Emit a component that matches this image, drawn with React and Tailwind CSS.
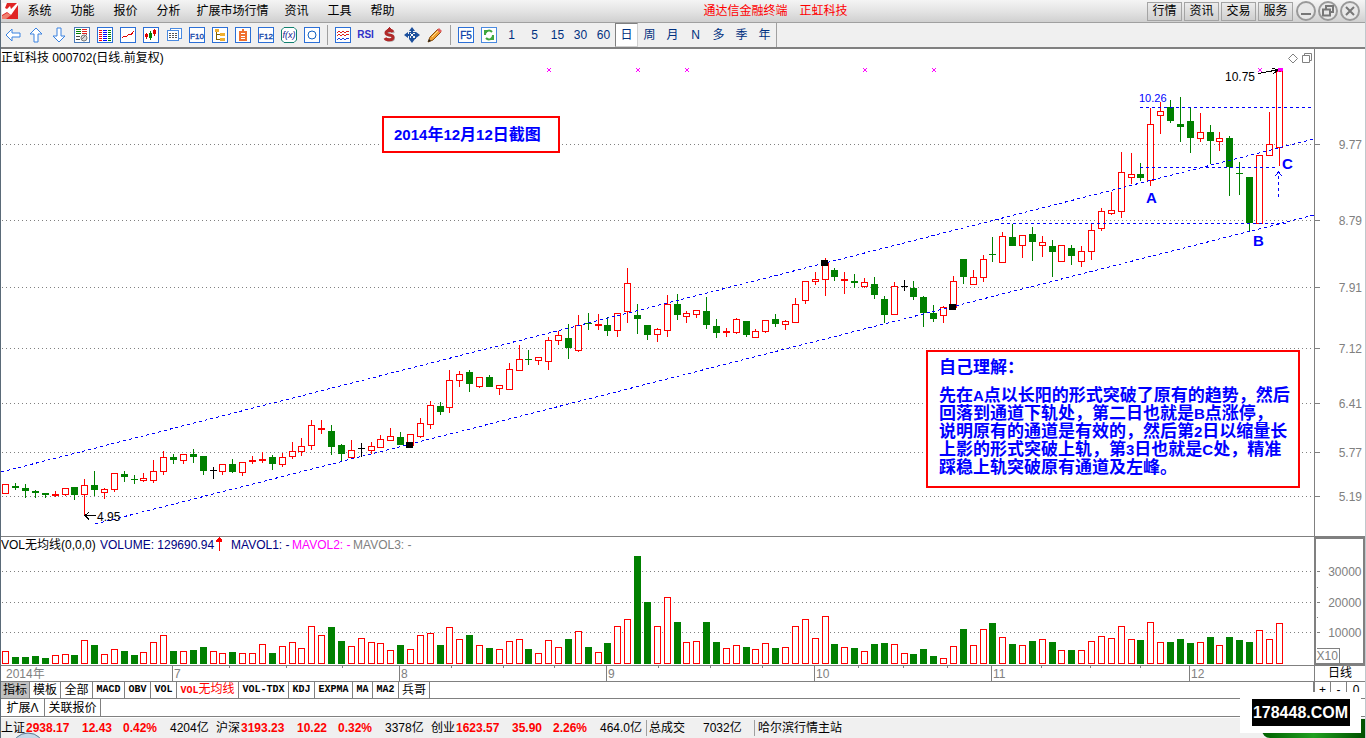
import React, { useState } from 'react';

const RED = '#ff0000';
const GREEN = '#008000';
const BLUE = '#0000ff';
const GRAY = '#808080';

// kind (r: up, g: down, R: flat up, k: unchanged), high, body top, body bottom, low, volume top
const DAYS = [
  ['r', 484, 484, 494, 494, 651], ['g', 483, 486, 488, 490, 657], ['g', 484, 488, 491, 498, 657],
  ['g', 490, 491, 493, 498, 656], ['g', 493, 493, 495, 498, 658], ['R', 491, 494, 496, 497, 655],
  ['r', 488, 488, 495, 496, 654], ['g', 487, 487, 495, 500, 655], ['r', 479, 485, 495, 515, 640],
  ['g', 471, 485, 490, 496, 645], ['r', 488, 489, 493, 499, 654], ['r', 473, 473, 490, 492, 649],
  ['g', 471, 474, 477, 482, 651], ['g', 475, 479, 480, 484, 655], ['r', 473, 478, 481, 482, 652],
  ['r', 460, 471, 481, 483, 642], ['r', 451, 457, 472, 475, 635], ['g', 454, 457, 460, 464, 651],
  ['r', 454, 454, 461, 464, 651], ['g', 449, 454, 457, 463, 650], ['g', 456, 456, 471, 475, 647],
  ['k', 467, 470, 471, 479, 651], ['r', 464, 464, 472, 475, 653], ['g', 459, 464, 472, 473, 652],
  ['r', 462, 462, 473, 476, 653], ['R', 456, 460, 462, 464, 653], ['R', 452, 459, 461, 463, 644],
  ['g', 455, 457, 464, 470, 653], ['r', 453, 457, 465, 467, 646], ['r', 442, 451, 457, 459, 642],
  ['r', 438, 446, 452, 456, 648], ['r', 420, 425, 446, 450, 626], ['R', 420, 428, 430, 434, 635],
  ['g', 425, 431, 447, 455, 627], ['g', 444, 445, 454, 462, 641], ['r', 440, 450, 458, 458, 646],
  ['k', 443, 448, 449, 457, 638], ['r', 442, 446, 451, 454, 642], ['r', 435, 439, 448, 448, 643],
  ['r', 428, 436, 441, 441, 650], ['g', 432, 437, 445, 445, 645], ['r', 434, 434, 446, 446, 649],
  ['r', 418, 423, 437, 438, 635], ['r', 401, 405, 425, 429, 633], ['g', 402, 406, 412, 415, 645],
  ['r', 370, 380, 408, 413, 627], ['r', 371, 374, 381, 387, 639], ['g', 370, 372, 384, 392, 635],
  ['r', 377, 377, 387, 388, 645], ['g', 375, 377, 387, 387, 648], ['r', 385, 385, 389, 395, 649],
  ['r', 363, 369, 390, 390, 641], ['r', 345, 359, 371, 371, 639], ['g', 350, 359, 360, 365, 649],
  ['r', 357, 357, 361, 365, 653], ['r', 337, 340, 362, 370, 640], ['r', 331, 335, 341, 345, 647],
  ['g', 324, 338, 348, 359, 639], ['r', 315, 325, 351, 352, 631], ['g', 313, 323, 324, 330, 647],
  ['R', 314, 324, 326, 330, 652], ['g', 317, 325, 331, 336, 643], ['r', 313, 313, 331, 337, 626],
  ['r', 268, 283, 312, 323, 619], ['g', 304, 315, 319, 334, 556], ['g', 325, 325, 335, 340, 602],
  ['r', 328, 329, 335, 342, 626], ['r', 295, 304, 331, 337, 597], ['g', 294, 304, 315, 320, 622],
  ['r', 311, 313, 317, 323, 642], ['r', 310, 310, 315, 318, 641], ['g', 297, 311, 325, 329, 622],
  ['g', 319, 326, 333, 338, 642], ['R', 328, 331, 333, 337, 648], ['r', 318, 319, 333, 334, 645],
  ['g', 321, 321, 335, 337, 647], ['r', 329, 331, 338, 338, 649], ['r', 320, 320, 332, 333, 643],
  ['g', 314, 319, 324, 327, 648], ['r', 320, 321, 325, 330, 647], ['r', 298, 304, 323, 323, 626],
  ['r', 281, 281, 301, 304, 619], ['r', 272, 279, 282, 285, 638], ['r', 258, 262, 280, 296, 616],
  ['g', 268, 270, 277, 281, 644], ['R', 272, 279, 281, 294, 647], ['g', 274, 281, 283, 288, 648],
  ['r', 278, 282, 287, 288, 651], ['g', 277, 284, 295, 299, 644], ['g', 296, 299, 315, 323, 643],
  ['r', 282, 286, 315, 315, 644], ['k', 280, 286, 287, 291, 653], ['g', 281, 288, 297, 300, 654],
  ['g', 296, 297, 313, 327, 649], ['g', 305, 313, 319, 322, 656], ['r', 306, 307, 316, 323, 658],
  ['r', 276, 281, 308, 308, 646], ['g', 259, 259, 277, 284, 629], ['r', 270, 277, 285, 285, 645],
  ['r', 255, 259, 278, 282, 629], ['g', 237, 254, 255, 262, 623], ['r', 232, 236, 263, 263, 637],
  ['g', 224, 237, 246, 246, 644], ['r', 235, 235, 246, 258, 645], ['g', 227, 234, 242, 261, 641],
  ['r', 236, 242, 246, 257, 639], ['g', 240, 246, 252, 277, 642], ['r', 245, 245, 262, 262, 650],
  ['g', 245, 248, 256, 265, 650], ['r', 246, 251, 262, 267, 650], ['r', 223, 230, 252, 260, 641],
  ['r', 208, 211, 229, 231, 636], ['r', 192, 210, 214, 215, 638], ['r', 152, 172, 212, 218, 626],
  ['r', 153, 174, 178, 184, 639], ['g', 163, 174, 178, 181, 640], ['r', 108, 124, 181, 186, 622],
  ['r', 102, 111, 116, 134, 642], ['g', 100, 107, 121, 123, 642], ['g', 97, 124, 127, 142, 639],
  ['g', 108, 121, 138, 153, 643], ['r', 113, 132, 139, 142, 642], ['g', 125, 132, 141, 164, 637],
  ['r', 132, 138, 142, 151, 645], ['g', 136, 138, 167, 196, 637], ['g', 162, 173, 174, 195, 640],
  ['g', 177, 177, 223, 232, 642], ['r', 155, 155, 224, 224, 630], ['r', 112, 144, 156, 156, 639],
  ['r', 71, 71, 148, 166, 623],
];

const dayX = (i) => Math.floor(5.8 + i * 9.871);

const PRICES = [[144, '9.77'], [220, '8.79'], [287, '7.91'], [348, '7.12'], [403, '6.41'], [452, '5.77'], [496, '5.19']];
const VOLUMES = [[571, '30000'], [602, '20000'], [632, '10000']];
const MONTHS = [[172, '7'], [399, '8'], [606, '9'], [814, '10'], [991, '11'], [1189, '12']];
const WEEKS = [229, 286, 342, 451, 503, 554, 658, 710, 762, 858, 903, 947, 1041, 1090, 1140];
const MARKS = [549, 638, 687, 865, 934, 1260, 1280];

const SANS = "font-['Liberation_Sans','Noto_Sans_CJK_SC',sans-serif]";

function GridLine({ y }) {
  return <line x1="2" x2="1313" y1={y + 0.5} y2={y + 0.5} stroke={GRAY} strokeDasharray="1 3" />;
}

function Candle({ x, day }) {
  const [kind, high, top, bottom, low] = day;
  const color = kind === 'g' ? GREEN : kind === 'k' ? '#000' : RED;
  return (
    <g>
      <rect x={x} y={high} width="1" height={low - high} fill={color} />
      {kind === 'r' ? (
        <rect x={x - 2.5} y={top + 0.5} width="6" height={bottom - top - 1} fill="#fff" stroke={color} />
      ) : (
        <rect x={x - 3} y={top} width="7" height={bottom - top} fill={color} />
      )}
    </g>
  );
}

function PriceChart() {
  return (
    <svg viewBox="1 67 1313 469" className="block w-full h-[469px]" shapeRendering="crispEdges" fontSize="12">
      {PRICES.map(([y]) => <GridLine key={y} y={y} />)}
      {DAYS.map((day, i) => <Candle key={i} x={dayX(i)} day={day} />)}

      {/* channel and levels */}
      <g stroke={BLUE} strokeDasharray="3 3" fill="none">
        <path d="M1 472L1314 139M95 524L1314 215" />
        <path d="M1140 107.5H1312M1140 167.5H1278M1001 223.5H1286" />
        <path d="M1278.5 197V172" />
      </g>
      <path d="M1275 176l3.5-4 3.5 4" stroke={BLUE} fill="none" />
      <path d="M821 260h7v6h-7zM406 442h7v6h-7zM949 304h7v6h-7z" />

      {MARKS.map((x) => (
        <path key={x} d={`M${x - 2} 68l4 4M${x + 2} 68l-4 4`} stroke="#ff00ff" />
      ))}
      <path d="M1278 68h5v3h-5z" fill="#ff00ff" />

      {/* extremes */}
      <g stroke="#000" fill="none">
        <path d="M1258 73.5L1277 70M1272 68l6 2-5 4" />
        <path d="M85 515.5H96M89 512l-4 3.5 4 4" />
      </g>
      <text x="1225" y="81">10.75</text>
      <text x="97" y="521">4.95</text>
      <text x="1139" y="102" fill={BLUE} fontSize="11">10.26</text>

      <g fill={BLUE} fontSize="15" fontWeight="bold">
        <text x="1146" y="203">A</text>
        <text x="1253" y="246">B</text>
        <text x="1282" y="169">C</text>
      </g>
    </svg>
  );
}

function PriceAxis() {
  return (
    <svg viewBox="1315 49 50 487" className="block w-full h-[487px]" shapeRendering="crispEdges" fontSize="12" fill={GRAY}>
      {PRICES.map(([y, label]) => (
        <g key={y}>
          <rect x="1315" y={y} width="5" height="1" />
          <text x="1362" y={y + 5} textAnchor="end">{label}</text>
        </g>
      ))}
    </svg>
  );
}

function VolumeChart() {
  return (
    <svg viewBox="1 553 1313 112" className="block w-full h-[112px]" shapeRendering="crispEdges">
      {VOLUMES.map(([y]) => <GridLine key={y} y={y} />)}
      {DAYS.map((day, i) => {
        const x = dayX(i);
        const top = day[5];
        return day[0] === 'g' ? (
          <rect key={i} x={x - 3} y={top} width="7" height={664 - top} fill={GREEN} />
        ) : (
          <rect key={i} x={x - 2.5} y={top + 0.5} width="6" height={663 - top} fill="#fff" stroke={RED} />
        );
      })}
    </svg>
  );
}

function VolumeAxis() {
  return (
    <svg viewBox="1317 539 46 124" className="block w-full h-[124px]" shapeRendering="crispEdges" fontSize="12" fill={GRAY}>
      {VOLUMES.map(([y, label]) => (
        <g key={y}>
          <rect x="1317" y={y} width="3" height="1" />
          <text x="1362" y={y + 5} textAnchor="end">{label}</text>
        </g>
      ))}
      <path d="M1317 587h1v1h-1zM1317 617h1v1h-1z" />
      <path d="M1317 648.5h22.500v14.500" fill="none" stroke={GRAY} />
      <text x="1317" y="660">X10</text>
    </svg>
  );
}

function DateAxis() {
  return (
    <svg viewBox="1 666 1313 15" className="block w-full h-[15px]" shapeRendering="crispEdges" fontSize="12" fill={GRAY}>
      <text x="6" y="678">2014年</text>
      {MONTHS.map(([x, label]) => (
        <g key={x}>
          <rect x={x} y="666" width="1" height="15" />
          <text x={x + 2} y="678">{label}</text>
        </g>
      ))}
      {WEEKS.map((x) => <rect key={x} x={x} y="666" width="1" height="2" />)}
    </svg>
  );
}

// toolbar glyphs, all on a 16 x 16 grid
function Icon({ children, frame = '#2b6fd6' }) {
  return (
    <svg viewBox="0 0 16 16" className="size-4" fill="none" shapeRendering="crispEdges">
      {frame && <rect x="0.5" y="0.5" width="15" height="15" fill="#fff" stroke={frame} />}
      {children}
    </svg>
  );
}

function TextIcon({ label }) {
  return (
    <Icon>
      <text x="8" y="12" textAnchor="middle" fontSize={label.length > 2 ? 8 : 10} fill="#0b3ea8" stroke="#0b3ea8" strokeWidth="0.300">{label}</text>
    </Icon>
  );
}

const ARROW = 'M1 8l6-6v4h8v4H7v4z';

const TOOLS = [
  ['后退', <Icon frame={null}><path d={ARROW} fill="#fff" stroke="#3a82e0" shapeRendering="auto" /></Icon>],
  ['上翻', <Icon frame={null}><path d={ARROW} transform="rotate(90 8 8)" fill="#fff" stroke="#3a82e0" shapeRendering="auto" /></Icon>],
  ['下翻', <Icon frame={null}><path d={ARROW} transform="rotate(-90 8 8)" fill="#fff" stroke="#3a82e0" shapeRendering="auto" /></Icon>],
  ['自选', (
    <Icon frame="#4a7ab8">
      <path d="M2 2.500h5M2 4.500h5M2 6.500h5" stroke="#008000" />
      <path d="M8 2.500h5M8 4.500h5M8 6.500h5" stroke="#e02020" />
      <path d="M2 9.500h4M2 12.500h4" stroke="#444" />
      <circle cx="10" cy="11" r="3" stroke="#777" fill="#ddd" shapeRendering="auto" />
      <path d="M8 12l5-5" stroke="#777" />
    </Icon>
  )],
  ['行情', (
    <Icon>
      <path d="M2 3.500h3M2 5.500h3M2 7.500h3M2 9.500h3M2 11.500h3M2 13.500h3" stroke="#ff0000" />
      <path d="M6 3.500h4M6 5.500h4M6 7.500h4M6 9.500h4M6 11.500h4M6 13.500h4" stroke="#0000ff" />
      <path d="M11 3.500h3M11 5.500h3M11 7.500h3M11 9.500h3M11 11.500h3M11 13.500h3" stroke="#008000" />
    </Icon>
  )],
  ['分时', <Icon><path d="M2 11l2-2 2 1 3-3 2 1 3-4" stroke="#e00000" /></Icon>],
  ['K线', (
    <Icon>
      <path d="M3.500 6v6M11.500 2v7" stroke="#e00000" />
      <path d="M7.500 4v9" stroke="#008000" />
      <path d="M2 7h3v3H2zM10 3h3v4h-3z" fill="#e00000" />
      <path d="M6 6h3v5H6z" fill="#008000" />
    </Icon>
  )],
  ['多股', (
    <Icon frame={null}>
      <path d="M4.500 1.500h11v10h-11z" fill="#fff" stroke="#4a8ae0" />
      <path d="M1.500 3.500h11v10h-11z" fill="#fff" stroke="#4a8ae0" />
      <path d="M3 6.500h8M3 8.500h8M3 10.500h8" stroke="#555" strokeDasharray="2 1" />
    </Icon>
  )],
  ['基本资料', <TextIcon label="F10" />],
  ['板块', (
    <Icon>
      <path d="M4.500 4v8M4 7.500h5M4 12.500h5" stroke="#806000" />
      <path d="M3 2h4v3H3zM8 6h5v3H8zM8 11h5v3H8z" fill="#f0b030" />
    </Icon>
  )],
  ['自选股', (
    <Icon>
      <path d="M5 5h6v8H5zM5 8h6M5 10.500h6M8 2v3" stroke="#f07030" strokeWidth="2" />
      <path d="M6 6.500h4M6 9h4M6 11.500h4" stroke="#fff" />
    </Icon>
  )],
  ['委托', <TextIcon label="F12" />],
  ['公式', (
    <Icon frame={null}>
      <path d="M3 .5h10l2.500 2.500v10l-2.500 2.500H3L.5 13V3z" fill="#fff" stroke="#108070" shapeRendering="auto" />
      <text x="8" y="11" textAnchor="middle" fontSize="9" fontStyle="italic" fill="#102090">f(x)</text>
    </Icon>
  )],
  ['圈选', <Icon><circle cx="8" cy="8" r="4" stroke="#1060c0" shapeRendering="auto" /></Icon>],
  null,
  ['叠加', (
    <Icon>
      <path d="M2 6l2-2 2 2 2-2 2 2 2-2 2 1M2 9l2-2 2 2 2-2 2 2 2-2 2 1" stroke="#e02020" />
      <path d="M2 13l2-2 2 2 2-2 2 2 2-2 2 1" stroke="#2040e0" />
    </Icon>
  )],
  ['指标', <span className="text-[10px] font-bold text-[#3030c8]">RSI</span>],
  ['除权', (
    <Icon frame={null}>
      <path d="M12 5c-1-2-7-2-7 1 0 3 7 1 7 4 0 4-7 3-8 1" stroke="#aaa" strokeWidth="2" transform="translate(1 1)" shapeRendering="auto" />
      <path d="M12 5c-1-2-7-2-7 1 0 3 7 1 7 4 0 4-7 3-8 1" stroke="#b02828" strokeWidth="3" shapeRendering="auto" />
      <path d="M8 0l4 4H4z" fill="#b02828" />
    </Icon>
  )],
  ['移动', (
    <Icon frame={null}>
      <path d="M8 0l3 4H9v3h3V5l4 3-4 3V9H9v3h2l-3 4-3-4h2V9H4v2L0 8l4-3v2h3V4H5z" fill="#1c4f9c" shapeRendering="auto" />
      <path d="M5 5h6v6H5z" stroke="#1c4f9c" />
      <path d="M7 7h2v2H7z" fill="#fff" />
    </Icon>
  )],
  ['画线', (
    <Icon frame={null}>
      <g shapeRendering="auto">
        <path d="M1 15l2-5 8-8 3 3-8 8z" fill="#f0a030" stroke="#8a5010" />
        <path d="M10 3l2-2 3 3-2 2z" fill="#e06060" />
        <path d="M1 15l1-3 2 2z" fill="#222" />
        <path d="M5 10l6-6" stroke="#ffe090" />
      </g>
    </Icon>
  )],
  null,
  ['切换', <TextIcon label="F5" />],
  ['刷新', (
    <Icon frame="#4a8ae0">
      <g stroke="#40a840" strokeWidth="2" shapeRendering="auto">
        <path d="M4 8a4 4 0 0 1 7-3M12 8a4 4 0 0 1-7 3" />
      </g>
      <path d="M3 3h5L3 8zM13 13H8l5-5z" fill="#40a840" />
    </Icon>
  )],
];

const PERIODS = ['1', '5', '15', '30', '60', '日', '周', '月', 'N', '多', '季', '年'];

function MenuBar() {
  return (
    <header className="flex items-center h-[23px] border-b border-[#a0a0a0] bg-linear-to-b from-[#f4f4f4] via-[#e4e4e4] to-[#d0d0d0]">
      <svg viewBox="0 0 16 16" className="size-4 shrink-0 ml-px">
        <path d="M0 0h16v16H0z" fill="#e02424" />
        <path d="M0 0h5L3 5l2 1 3-3 1 3 6-6h1v2L9 12 5 9l-5 3z" fill="#fff" />
        <path d="M0 13l5-3 4 2-5 4H0z" fill="#f08070" />
      </svg>
      <nav className="flex">
        {['系统', '功能', '报价', '分析', '扩展市场行情', '资讯', '工具', '帮助'].map((name) => (
          <button key={name} className={name.length > 2 ? 'w-[85px]' : 'w-[43px]'}>{name}</button>
        ))}
      </nav>
      <div className="flex-1 flex justify-center gap-3 text-[#ff0000]">
        <span>通达信金融终端</span>
        <span>正虹科技</span>
      </div>
      <div className="flex gap-0.5">
        {['行情', '资讯', '交易', '服务'].map((name) => (
          <button key={name} className="w-[35px] h-[19px] leading-[16px] border border-[#a4a4a4] bg-linear-to-b from-[#ececec] to-[#cfcfcf]">{name}</button>
        ))}
      </div>
      <div className="flex gap-0.5 ml-[3px] mr-[5px]">
        {[['最小化', 'M5 13h10'], ['还原', 'M8 8V5h7v6h-3M5 8.500h7v6H5z'], ['关闭', 'M6 6l8 8M14 6l-8 8']].map(([name, d]) => (
          <button key={name} aria-label={name}>
            <svg viewBox="0 0 20 20" className="size-5 block" fill="none" strokeWidth="2">
              <circle cx="10" cy="10" r="9" fill="#e8e8e8" stroke="#999" />
              <path d={d} stroke="#777" />
            </svg>
          </button>
        ))}
      </div>
    </header>
  );
}

function Toolbar({ period, onPeriod }) {
  return (
    <div className="flex items-stretch h-[26px] bg-[#f0f0f0] border-b-2 border-[#808080]">
      {TOOLS.map((tool, i) =>
        tool ? (
          <button key={i} aria-label={tool[0]} className="w-[23px] flex items-center justify-center">{tool[1]}</button>
        ) : (
          <div key={i} className="w-2 flex justify-center py-0.5"><div className="w-px bg-[#a0a0a0]" /></div>
        )
      )}
      {PERIODS.map((name) => (
        <button
          key={name}
          onClick={() => onPeriod(name)}
          className={`w-[23px] text-[12px] text-[#003080] ${period === name ? 'bg-white border border-[#d0d0d0] border-t-[#808080] border-l-[#808080]' : ''}`}
        >
          {name}
        </button>
      ))}
      <div className="w-px bg-[#a0a0a0]" />
    </div>
  );
}

// Latin letters and digits run smaller than the Chinese text in the notes
function Note({ text }) {
  return text.split(/([A-Z0-9]+)/).map((part, i) =>
    i % 2 ? <span key={i} className="text-[15px]">{part}</span> : part
  );
}

const NOTE_LINES = [
  '先在A点以长阳的形式突破了原有的趋势，然后',
  '回落到通道下轨处，第二日也就是B点涨停，',
  '说明原有的通道是有效的，然后第2日以缩量长',
  '上影的形式突破上轨，第3日也就是C处，精准',
  '踩稳上轨突破原有通道及左峰。',
];

function Notes() {
  return (
    <>
      <div className="absolute left-[381px] top-[67px] w-[178px] h-[37px] border-2 border-[#ff0000] bg-white px-2.5 leading-[33px] text-[16px] font-bold text-[#0000ff] whitespace-nowrap">
        <Note text="2014年12月12日截图" />
      </div>
      <div className="absolute left-[925px] top-[301px] w-[374px] h-[138px] border-2 border-[#ff0000] bg-white px-[11px] pt-[7px] text-[17px] leading-[18px] font-bold text-[#0000ff] whitespace-nowrap">
        <p className="mb-2.5">自己理解：</p>
        {NOTE_LINES.map((line) => <p key={line}><Note text={line} /></p>)}
      </div>
    </>
  );
}

const TABS = [
  ['指标', 'w-[29px] bg-[#c0c0c0]'], ['模板', 'w-[31px]'], ['全部', 'w-[32px]'], ['MACD', 'w-[32px]'],
  ['OBV', 'w-[26px]'], ['VOL', 'w-[26px]'], ['VOL无均线', 'w-[62px] text-[#ff0000]'], ['VOL-TDX', 'w-[50px]'],
  ['KDJ', 'w-[26px]'], ['EXPMA', 'w-[38px]'], ['MA', 'w-[20px]'], ['MA2', 'w-[26px]'], ['兵哥', 'w-[31px]'],
];

function IndicatorTabs() {
  return (
    <div className="flex h-[17px] border-b border-[#808080]">
      {TABS.map(([name, look]) => {
        const latin = /^[A-Z]/.test(name);
        return (
          <button
            key={name}
            className={`shrink-0 border-r border-[#808080] leading-[16px] whitespace-nowrap ${look} ${latin ? "font-['Liberation_Mono','Noto_Sans_CJK_SC',monospace] text-[10px] font-bold" : ''}`}
          >
            {name === 'VOL无均线' ? <>VOL<span className="text-[12px] font-normal">无均线</span></> : name}
          </button>
        );
      })}
      <div className="flex ml-auto w-[52px] border-l-2 border-[#808080]">
        <button className="w-4 border-r border-[#808080] leading-[16px]">+</button>
        <button className="w-4 border-r border-[#808080] leading-[16px]">-</button>
        <button className="flex-1 leading-[16px]">0</button>
      </div>
    </div>
  );
}

const INDEXES = [
  ['上证', '2938.17', '12.43', '0.42%', '4204亿'],
  ['沪深', '3193.23', '10.22', '0.32%', '3378亿'],
  ['创业', '1623.57', '35.90', '2.26%', '464.0亿'],
];

function StatusBar() {
  return (
    <footer className="relative flex items-center h-[21px] bg-[#f0f0f0] border-t border-white whitespace-nowrap overflow-hidden">
      {INDEXES.map(([name, value, change, percent, amount]) => (
        <div key={name} className="flex w-[215px]">
          <span className="w-[25px]">{name}</span>
          <b className="w-14 text-[#ff0000]">{value}</b>
          <b className="w-[41px] text-[#ff0000]">{change}</b>
          <b className="w-[47px] text-[#ff0000]">{percent}</b>
          <span>{amount}</span>
        </div>
      ))}
      <div className="flex w-[108px] border-l border-[#a0a0a0] pl-0.5">
        <span className="w-[54px]">总成交</span>
        <span>7032亿</span>
      </div>
      <div className="border-l border-[#a0a0a0] pl-[3px]">哈尔滨行情主站</div>
      <svg viewBox="0 0 30 6" className="absolute left-3 bottom-0 w-[30px] h-1.5">
        <ellipse cx="15" cy="16" rx="16" ry="15" fill="#c4d8e8" stroke="#5a7890" />
      </svg>
      <div className="absolute right-0 bottom-0 w-[103px] h-[19px] rounded-l-lg bg-linear-to-r from-[#006000] via-[#20a020] to-[#005000]" />
    </footer>
  );
}

export default function App() {
  const [period, setPeriod] = useState('日');

  return (
    <div className={`${SANS} relative text-[12px] leading-4 text-black bg-white border-l border-l-[#5a6a78] border-r border-r-[#c0c8cc] overflow-hidden`}>
      <MenuBar />
      <Toolbar period={period} onPeriod={setPeriod} />

      {/* Price */}
      <div className="flex border-b border-[#808080]">
        <div className="relative flex-1 min-w-0">
          <div className="flex items-center h-[18px]">
            <h1>正虹科技 000702(日线.前复权)</h1>
            <svg viewBox="0 0 26 12" className="ml-auto w-[26px] h-3" fill="none" stroke={GRAY}>
              <path d="M5 2l4.500 4.500L5 11 .5 6.500z" />
              <path d="M16.500 3.500v-2h7v7h-2M14.500 3.500h7v7h-7z" />
            </svg>
          </div>
          <PriceChart />
          <Notes />
        </div>
        <div className="w-[51px] border-l border-[#808080]"><PriceAxis /></div>
      </div>

      {/* Volume */}
      <div className="flex border-b border-[#808080]">
        <div className="flex-1 min-w-0">
          <div className="flex h-4 whitespace-nowrap">
            <span className="w-[99px]">VOL无均线(0,0,0)</span>
            <span className="text-[#000080]">VOLUME: 129690.94</span>
            <svg viewBox="0 0 8 16" className="w-2 h-4 ml-px mr-2" fill={RED} shapeRendering="crispEdges">
              <path d="M4 0l3 3v2H5v9H4V5H1V3z" />
            </svg>
            <span className="w-[61px] text-[#000080]">MAVOL1: -</span>
            <span className="w-[61px] text-[#ff00ff]">MAVOL2: -</span>
            <span className="text-[#808080]">MAVOL3: -</span>
          </div>
          <VolumeChart />
        </div>
        <div className="w-[51px] border-2 border-[#808080]"><VolumeAxis /></div>
      </div>

      {/* Dates */}
      <div className="flex border-b border-[#808080]">
        <div className="flex-1 min-w-0"><DateAxis /></div>
        <div className="w-[51px] h-[15px] leading-[15px] border-l border-[#808080] text-center">日线</div>
      </div>

      <IndicatorTabs />
      <div className="flex h-[18px] border-b border-[#808080]">
        <button className="w-11 border-r border-[#808080]">扩展Λ</button>
        <button className="w-14 border-r border-[#808080]">关联报价</button>
      </div>
      <StatusBar />

      {/* Site badge */}
      <div className="absolute right-1 bottom-[5px] w-[121px] h-[41px] bg-white flex items-center justify-center">
        <a href="#" className="w-[98px] h-[27px] leading-[27px] bg-black text-white text-[16px] font-bold text-center">178448.COM</a>
      </div>
    </div>
  );
}
